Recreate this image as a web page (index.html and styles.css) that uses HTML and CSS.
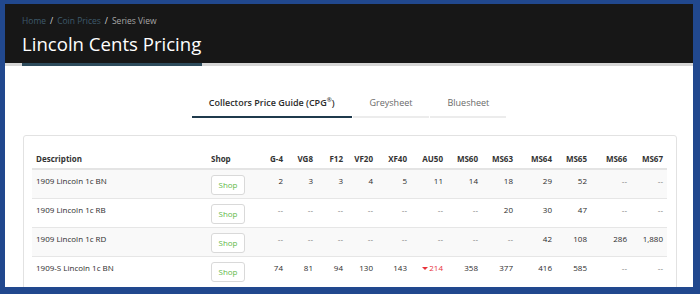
FILE: index.html
```html
<!DOCTYPE html>
<html lang="en">
<head>
<meta charset="utf-8">
<title>Lincoln Cents Pricing</title>
<link rel="stylesheet" href="styles.css">
</head>
<body>
<div class="frame">
  <div class="page">
    <header class="hero">
      <nav class="crumbs"><a class="crumb-link">Home</a><span class="sep">/</span><a class="crumb-link">Coin Prices</a><span class="sep">/</span><span class="crumb-current">Series View</span></nav>
      <h1 class="title">Lincoln Cents Pricing</h1>
    </header>
    <div class="hero-rule"><span class="hero-accent"></span></div>

    <div class="tabs">
      <div class="tab active">Collectors Price Guide (CPG<sup>®</sup>)</div>
      <div class="tab">Greysheet</div>
      <div class="tab">Bluesheet</div>
    </div>

    <section class="card">
      <table class="prices">
        <colgroup>
          <col class="c-desc"><col class="c-shop"><col class="c-g4"><col class="c-30"><col class="c-30"><col class="c-30"><col class="c-34"><col class="c-36"><col class="c-35"><col class="c-35"><col class="c-39"><col class="c-35"><col class="c-40"><col class="c-36">
        </colgroup>
        <thead>
          <tr>
            <th class="left">Description</th><th class="left">Shop</th><th>G-4</th><th>VG8</th><th>F12</th><th>VF20</th><th>XF40</th><th>AU50</th><th>MS60</th><th>MS63</th><th>MS64</th><th>MS65</th><th>MS66</th><th>MS67</th>
          </tr>
        </thead>
        <tbody>
          <tr class="odd">
            <td class="left">1909 Lincoln 1c BN</td><td class="left"><span class="shop">Shop</span></td>
            <td>2</td><td>3</td><td>3</td><td>4</td><td>5</td><td>11</td><td>14</td><td>18</td><td>29</td><td>52</td><td class="na">--</td><td class="na">--</td>
          </tr>
          <tr>
            <td class="left">1909 Lincoln 1c RB</td><td class="left"><span class="shop">Shop</span></td>
            <td class="na">--</td><td class="na">--</td><td class="na">--</td><td class="na">--</td><td class="na">--</td><td class="na">--</td><td class="na">--</td><td>20</td><td>30</td><td>47</td><td class="na">--</td><td class="na">--</td>
          </tr>
          <tr class="odd">
            <td class="left">1909 Lincoln 1c RD</td><td class="left"><span class="shop">Shop</span></td>
            <td class="na">--</td><td class="na">--</td><td class="na">--</td><td class="na">--</td><td class="na">--</td><td class="na">--</td><td class="na">--</td><td class="na">--</td><td>42</td><td>108</td><td>286</td><td>1,880</td>
          </tr>
          <tr>
            <td class="left">1909-S Lincoln 1c BN</td><td class="left"><span class="shop">Shop</span></td>
            <td>74</td><td>81</td><td>94</td><td>130</td><td>143</td><td><span class="down">214</span></td><td>358</td><td>377</td><td>416</td><td>585</td><td class="na">--</td><td class="na">--</td>
          </tr>
        </tbody>
      </table>
    </section>
  </div>
</div>
</body>
</html>
```

FILE: styles.css
```css
html, body {
  margin: 0;
  padding: 0;
  background: #ffffff;
  overflow: hidden;
}

.frame {
  width: 700px;
  height: 294px;
  box-sizing: border-box;
  border-style: solid;
  border-color: #21488e;
  border-width: 4px 7px 7px 5px;
  overflow: hidden;
  background: #ffffff;
  font-family: "Open Sans", "Liberation Sans", sans-serif;
  color: #333333;
}

.page {
  width: 688px;
}

/* hero header */
.hero {
  background: #171717;
  height: 59px;
  padding: 12px 0 0 17px;
  box-sizing: border-box;
}

.crumbs {
  font-size: 8.5px;
  line-height: 10px;
  color: #cfcfcf;
  display: flex;
  align-items: center;
}

.crumb-link {
  color: #3e5a6c;
}

.sep {
  color: #d8d8d8;
  margin: 0 4px;
}

.crumb-current {
  color: #a6a6a6;
}

.title {
  margin: 6px 0 0;
  font-size: 18.6px;
  line-height: 24px;
  font-weight: 400;
  color: #ffffff;
}

.hero-rule {
  height: 3px;
  background: #d6d6d6;
  padding-left: 17px;
}

.hero-accent {
  display: block;
  width: 180px;
  height: 3px;
  background: #2d4b5c;
}

/* tabs */
.tabs {
  display: flex;
  justify-content: center;
  margin-top: 20px;
}

.tab {
  padding: 10px 17px 6px;
  font-size: 9px;
  line-height: 14px;
  color: #6a6a6a;
  border-bottom: 2px solid #ececec;
}

.tab + .tab {
  margin-left: 1px;
}

.tab.active {
  color: #2b2b2b;
  font-weight: 600;
  border-bottom-color: #1f3a4c;
}

.tab sup {
  font-size: 6px;
  line-height: 0;
}

/* card */
.card {
  margin: 17px 0 0 18px;
  width: 654px;
  box-sizing: border-box;
  border: 1px solid #e2e2e2;
  border-radius: 3px;
  padding: 8px;
  background: #ffffff;
}

.prices {
  width: 635px;
  table-layout: fixed;
  border-collapse: collapse;
  font-size: 8px;
}

.c-desc { width: 175px; }
.c-shop { width: 43px; }
.c-g4 { width: 37px; }
.c-30 { width: 30px; }
.c-34 { width: 34px; }
.c-35 { width: 35px; }
.c-36 { width: 36px; }
.c-39 { width: 39px; }
.c-40 { width: 40px; }

.prices th {
  font-weight: 700;
  color: #333333;
  text-align: right;
  padding: 8px 4px 2px;
  line-height: 14px;
  vertical-align: bottom;
  border-bottom: 2px solid #e4e4e4;
  white-space: nowrap;
}

.prices td {
  text-align: right;
  padding: 4px 4px 3px;
  line-height: 14px;
  vertical-align: top;
  border-top: 1px solid #e6e6e6;
  color: #2c2c2c;
  white-space: nowrap;
}

.prices .left {
  text-align: left;
}

.prices tr.odd td {
  background: #f9f9f9;
}

.prices td.na {
  color: #777777;
}

.shop {
  display: inline-block;
  box-sizing: border-box;
  width: 34px;
  height: 20px;
  margin-top: 1px;
  border: 1px solid #d9d9d9;
  border-radius: 3px;
  background: #ffffff;
  color: #62b947;
  text-align: center;
  line-height: 18px;
  font-size: 8px;
}

.down {
  color: #e8323a;
}

.down::before {
  content: "";
  display: inline-block;
  width: 0;
  height: 0;
  border-left: 3px solid transparent;
  border-right: 3px solid transparent;
  border-top: 3px solid #e8323a;
  margin-right: 1px;
  vertical-align: 1px;
}
```
